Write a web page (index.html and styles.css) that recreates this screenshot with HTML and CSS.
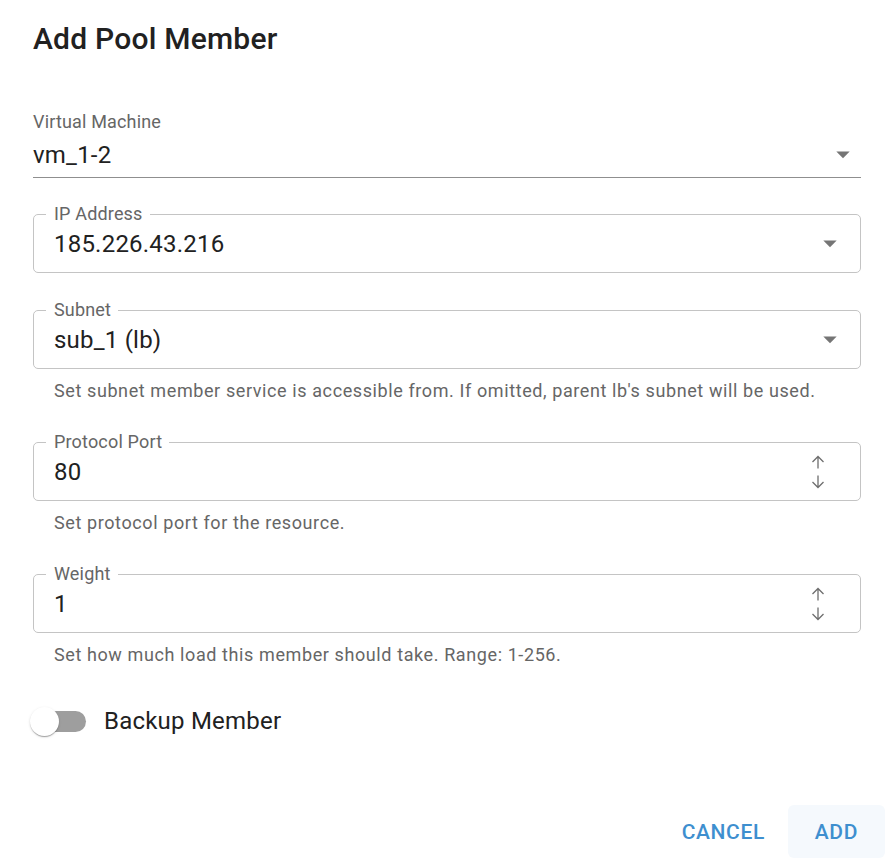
FILE: index.html
```html
<!DOCTYPE html>
<html lang="en">
<head>
<meta charset="utf-8">
<title>Add Pool Member</title>
<link rel="stylesheet" href="styles.css">
</head>
<body>
<div class="dialog">
  <h2 class="title">Add Pool Member</h2>

  <div class="std-field">
    <div class="std-label">Virtual Machine</div>
    <div class="std-input">
      <span class="value">vm_1-2</span>
      <svg class="caret" width="16" height="8" viewBox="0 0 16 8"><path d="M1.3 0.5 L8 7.2 L14.7 0.5 Z" fill="#757575"/></svg>
    </div>
  </div>

  <fieldset class="out-field first">
    <legend>IP Address</legend>
    <div class="out-input">
      <span class="value">185.226.43.216</span>
      <svg class="caret" width="16" height="8" viewBox="0 0 16 8"><path d="M1.3 0.5 L8 7.2 L14.7 0.5 Z" fill="#757575"/></svg>
    </div>
  </fieldset>

  <fieldset class="out-field">
    <legend>Subnet</legend>
    <div class="out-input">
      <span class="value">sub_1 (lb)</span>
      <svg class="caret" width="16" height="8" viewBox="0 0 16 8"><path d="M1.3 0.5 L8 7.2 L14.7 0.5 Z" fill="#757575"/></svg>
    </div>
  </fieldset>
  <p class="helper">Set subnet member service is accessible from. If omitted, parent lb's subnet will be used.</p>

  <fieldset class="out-field after-helper">
    <legend>Protocol Port</legend>
    <div class="out-input">
      <span class="value">80</span>
      <svg class="spin" width="14" height="34" viewBox="0 0 14 34">
        <path d="M7 1.5 V13.5 M1.5 7 L7 1.5 L12.5 7" fill="none" stroke="#6e6e6e" stroke-width="1.3"/>
        <path d="M7 20.5 V32.5 M1.5 27 L7 32.5 L12.5 27" fill="none" stroke="#6e6e6e" stroke-width="1.3"/>
      </svg>
    </div>
  </fieldset>
  <p class="helper">Set protocol port for the resource.</p>

  <fieldset class="out-field after-helper">
    <legend>Weight</legend>
    <div class="out-input">
      <span class="value">1</span>
      <svg class="spin" width="14" height="34" viewBox="0 0 14 34">
        <path d="M7 1.5 V13.5 M1.5 7 L7 1.5 L12.5 7" fill="none" stroke="#6e6e6e" stroke-width="1.3"/>
        <path d="M7 20.5 V32.5 M1.5 27 L7 32.5 L12.5 27" fill="none" stroke="#6e6e6e" stroke-width="1.3"/>
      </svg>
    </div>
  </fieldset>
  <p class="helper">Set how much load this member should take. Range: 1-256.</p>

  <div class="switch-row">
    <span class="switch">
      <span class="track"></span>
      <span class="thumb"></span>
    </span>
    <span class="switch-label">Backup Member</span>
  </div>

  <div class="actions">
    <button class="btn cancel">Cancel</button>
    <button class="btn add">Add</button>
  </div>
</div>
</body>
</html>
```

FILE: styles.css
```css
* { box-sizing: border-box; }

html, body {
  margin: 0;
  padding: 0;
  background: #ffffff;
}

body {
  font-family: Roboto, "Noto Sans", Arial, sans-serif;
  color: #212121;
}

.dialog {
  width: 892px;
  padding: 0 31px 0 33px;
}

.title {
  margin: 0;
  padding-top: 23px;
  font-size: 30px;
  line-height: 32px;
  font-weight: 500;
  letter-spacing: 0.22px;
  color: #212121;
}

.std-field {
  margin-top: 57px;
}

.std-label {
  font-size: 18px;
  line-height: 20px;
  color: #666666;
  letter-spacing: 0.17px;
}

.std-input {
  display: flex;
  align-items: center;
  justify-content: space-between;
  height: 46px;
  padding-top: 0;
  border-bottom: 1px solid #8f8f8f;
}

.value {
  font-size: 24px;
  line-height: 32px;
  letter-spacing: 0.22px;
  color: #212121;
}

.std-input .caret {
  margin-right: 10px;
}

.out-field {
  margin: 27px 0 0 0;
  padding: 0 20px;
  border: 1px solid #c4c4c4;
  border-radius: 5px;
  min-inline-size: 0;
}

.out-field.first {
  margin-top: 26px;
}

.out-field.after-helper {
  margin-top: 28px;
}

.out-field legend {
  margin-left: -8px;
  padding: 0 7px 0 8px;
  font-size: 18px;
  line-height: 20px;
  color: #666666;
  letter-spacing: 0.17px;
}

.out-input {
  display: flex;
  align-items: center;
  justify-content: space-between;
  height: 58px;
  padding-top: 2px;
  margin-top: -10px;
}

.out-input .caret {
  margin-right: 2px;
}

.out-input .spin {
  margin-right: 15px;
}

.helper {
  margin: 9px 0 0 21px;
  font-size: 18px;
  line-height: 26px;
  letter-spacing: 0.6px;
  color: #666666;
}

.switch-row {
  display: flex;
  align-items: center;
  height: 50px;
  margin-top: 28px;
}

.switch {
  position: relative;
  display: block;
  width: 56px;
  height: 29px;
  margin-left: -3px;
}

.track {
  position: absolute;
  left: 8px;
  top: 4px;
  width: 48px;
  height: 21px;
  border-radius: 11px;
  background: #9e9e9e;
}

.thumb {
  position: absolute;
  left: 0;
  top: 0;
  width: 29px;
  height: 29px;
  border-radius: 50%;
  background: #ffffff;
  box-shadow: 0 2px 1px -1px rgba(0,0,0,0.2), 0 1px 1px 0 rgba(0,0,0,0.14), 0 1px 3px 0 rgba(0,0,0,0.12);
}

.switch-label {
  margin-left: 18px;
  font-size: 24px;
  line-height: 32px;
  letter-spacing: 0.22px;
  color: #212121;
}

.actions {
  display: flex;
  justify-content: flex-end;
  align-items: center;
  gap: 12px;
  margin: 59px -24px 0 0;
}

.btn {
  height: 53px;
  border: 0;
  border-radius: 6px;
  background: transparent;
  font-family: Roboto, "Noto Sans", Arial, sans-serif;
  font-size: 21px;
  font-weight: 500;
  letter-spacing: 0.6px;
  text-transform: uppercase;
  color: #3e8fcf;
  cursor: pointer;
}

.cancel {
  padding: 0 11px;
}

.add {
  padding: 0 27px;
  background: #f5f9fd;
}
```
